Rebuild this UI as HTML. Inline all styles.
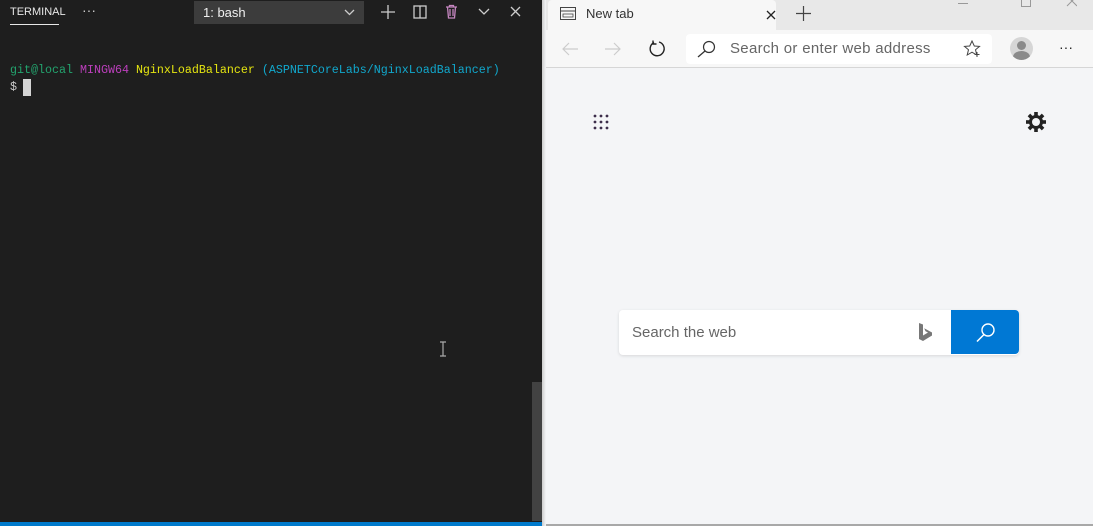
<!DOCTYPE html>
<html><head><style>
*{margin:0;padding:0;box-sizing:border-box}
body{width:1093px;height:526px;overflow:hidden;position:relative;background:#f4f5f7;font-family:"Segoe UI","Liberation Sans",sans-serif}
.term{position:absolute;left:0;top:0;width:542px;height:526px;background:#1e1e1e;color:#ccc}
.abs{position:absolute}
.mono{font-family:"Liberation Mono","DejaVu Sans Mono",monospace;font-size:11.67px;white-space:pre}
</style></head><body>
<div class="term">
 <div class="abs" style="left:10px;top:6px;font-size:11px;color:#e7e7e7">TERMINAL</div>
 <div class="abs" style="left:10px;top:24px;width:49px;height:1px;background:#e7e7e7"></div>
 <div class="abs" style="left:82px;top:2px;font-size:14px;color:#ccc">···</div>
 <div class="abs" style="left:194px;top:1px;width:170px;height:23px;background:#3c3c3c;color:#f0f0f0;font-size:13px;padding:4px 9px">1: bash
  <svg class="abs" style="left:150px;top:8px" width="11" height="7"><path d="M1 1l4.5 4.5L10 1" stroke="#ccc" fill="none" stroke-width="1.3"/></svg></div>
 <svg class="abs" style="left:381px;top:5px" width="14" height="14"><path d="M7 0v14M0 7h14" stroke="#ccc" stroke-width="1.3"/></svg>
 <svg class="abs" style="left:413px;top:5px" width="14" height="14"><rect x="1" y="1" width="12" height="12" fill="none" stroke="#ccc" stroke-width="1.3"/><path d="M7 1v12" stroke="#ccc" stroke-width="1.3"/></svg>
 <svg class="abs" style="left:445px;top:4px" width="13" height="15"><path d="M1 3h11M4.5 3V1.5h4V3M2.5 3l1 11h6l1-11M5 5v7M8 5v7" stroke="#c586c0" fill="none" stroke-width="1.3"/></svg>
 <svg class="abs" style="left:478px;top:8px" width="12" height="8"><path d="M1 1l5 5 5-5" stroke="#ccc" fill="none" stroke-width="1.3"/></svg>
 <svg class="abs" style="left:510px;top:6px" width="11" height="11"><path d="M1 1l9 9M10 1l-9 9" stroke="#ccc" stroke-width="1.3"/></svg>
 <div class="abs mono" style="left:10px;top:63px"><span style="color:#23a36e">git@local</span> <span style="color:#bc3fbc">MINGW64</span> <span style="color:#e5e510">NginxLoadBalancer</span> <span style="color:#11a8cd">(ASPNETCoreLabs/NginxLoadBalancer)</span></div>
 <div class="abs mono" style="left:10px;top:80px;color:#ccc">$</div>
 <div class="abs" style="left:23px;top:79px;width:8px;height:17px;background:#d4d4d4"></div>
 <svg class="abs" style="left:439px;top:341px" width="8" height="16"><path d="M1 1h6M4 1v14M1 15h6" stroke="#aaa" stroke-width="1.2" fill="none"/></svg>
 <div class="abs" style="left:532px;top:382px;width:10px;height:139px;background:#424242"></div>
 <div class="abs" style="left:0;top:522px;width:542px;height:4px;background:#007acc"></div>
</div>
<div class="abs" style="left:542px;top:0;width:4px;height:526px;background:linear-gradient(90deg,#ccc,#f4f5f7)"></div>
<div class="abs" style="left:546px;top:0;width:547px;height:30px;background:#e8e8e8"></div>
<div class="abs" style="left:548px;top:0;width:228px;height:30px;background:#f7f7f7;border-radius:4px 4px 0 0"></div>
<svg class="abs" style="left:560px;top:7px" width="16" height="13"><rect x="0.5" y="0.5" width="15" height="12" fill="none" stroke="#444"/><path d="M0.5 4h15" stroke="#444"/><rect x="3" y="7" width="10" height="3" fill="none" stroke="#444" stroke-width=".8"/></svg>
<div class="abs" style="left:586px;top:6px;font-size:13px;color:#333">New tab</div>
<svg class="abs" style="left:766px;top:10px" width="10" height="10"><path d="M1 1l8 8M9 1l-8 8" stroke="#222" stroke-width="1.3"/></svg>
<svg class="abs" style="left:796px;top:6px" width="15" height="15"><path d="M7.5 0v15M0 7.5h15" stroke="#444" stroke-width="1.2"/></svg>
<div class="abs" style="left:958px;top:3px;width:10px;height:1px;background:#999"></div>
<div class="abs" style="left:1021px;top:-2px;width:10px;height:9px;border:1px solid #999"></div>
<svg class="abs" style="left:1066px;top:0" width="11" height="7"><path d="M1 -4l10 10M11 -4l-10 10" stroke="#999" stroke-width="1"/></svg>
<div class="abs" style="left:546px;top:30px;width:547px;height:38px;background:#f7f7f7;border-bottom:1px solid #d6d6d6"></div>
<svg class="abs" style="left:561px;top:41px" width="18" height="16"><path d="M17 8H2M8 2L2 8l6 6" stroke="#ccc" fill="none" stroke-width="1.2"/></svg>
<svg class="abs" style="left:604px;top:41px" width="18" height="16"><path d="M1 8h15M10 2l6 6-6 6" stroke="#ccc" fill="none" stroke-width="1.2"/></svg>
<svg class="abs" style="left:648px;top:40px" width="18" height="18"><path d="M6 2.5A7 7 0 1 0 11 2" stroke="#222" fill="none" stroke-width="1.4"/><path d="M5 0.5v3.5h3.5" stroke="#222" fill="none" stroke-width="1.4"/></svg>
<div class="abs" style="left:686px;top:34px;width:306px;height:30px;background:#fff;border-radius:4px"></div>
<svg class="abs" style="left:697px;top:40px" width="20" height="18"><circle cx="12" cy="7" r="5.5" stroke="#333" fill="none" stroke-width="1.2"/><path d="M8 11l-7 6" stroke="#333" stroke-width="1.3"/></svg>
<div class="abs" style="left:730px;top:40px;font-size:15px;color:#666;letter-spacing:.3px">Search or enter web address</div>
<svg class="abs" style="left:963px;top:40px" width="18" height="18"><path d="M9 1l2.3 5 5.2.4-4 3.4 1.3 5.2L9 12.2 4.2 15l1.3-5.2-4-3.4 5.2-.4z" stroke="#444" fill="none" stroke-width="1"/><path d="M14 12v5M11.5 14.5h5" stroke="#444"/></svg>
<div class="abs" style="left:1010px;top:37px;width:23px;height:23px;border-radius:50%;background:#d6d6d6;overflow:hidden"><div class="abs" style="left:7px;top:4px;width:9px;height:9px;border-radius:50%;background:#8a8a8a"></div><div class="abs" style="left:3px;top:14px;width:17px;height:12px;border-radius:50% 50% 0 0;background:#8a8a8a"></div></div>
<div class="abs" style="left:1059px;top:39px;font-size:14px;color:#222">···</div>
<svg class="abs" style="left:593px;top:114px" width="16" height="16"><g fill="#3c2d4a"><circle cx="2" cy="2" r="1.4"/><circle cx="8" cy="2" r="1.4"/><circle cx="14" cy="2" r="1.4"/><circle cx="2" cy="8" r="1.4"/><circle cx="8" cy="8" r="1.4"/><circle cx="14" cy="8" r="1.4"/><circle cx="2" cy="14" r="1.4"/><circle cx="8" cy="14" r="1.4"/><circle cx="14" cy="14" r="1.4"/></g></svg>
<svg class="abs" style="left:1025px;top:111px" width="22" height="22" viewBox="0 0 22 22"><g fill="#222"><circle cx="11" cy="11" r="7"/><rect x="9.2" y="1" width="3.6" height="20"/><rect x="9.2" y="1" width="3.6" height="20" transform="rotate(45 11 11)"/><rect x="9.2" y="1" width="3.6" height="20" transform="rotate(90 11 11)"/><rect x="9.2" y="1" width="3.6" height="20" transform="rotate(135 11 11)"/></g><circle cx="11" cy="11" r="4" fill="#f4f5f7"/></svg>
<div class="abs" style="left:619px;top:310px;width:400px;height:45px;background:#fff;border-radius:4px;box-shadow:0 1px 3px rgba(0,0,0,.12)"></div>
<div class="abs" style="left:632px;top:324px;font-family:'Liberation Sans',sans-serif;font-size:15px;color:#666">Search the web</div>
<svg class="abs" style="left:918px;top:322px" width="16" height="21"><path d="M1 1l4 1.5v11l5-3-2.5-1.2-1.3-3L14 10.5v3L5 19 1 17z" fill="#777"/></svg>
<div class="abs" style="left:951px;top:310px;width:68px;height:44px;background:#0078d4;border-radius:0 4px 4px 0"></div>
<svg class="abs" style="left:975px;top:322px" width="22" height="21"><circle cx="13" cy="8" r="6" stroke="#fff" fill="none" stroke-width="1.4"/><path d="M9 12.5l-7 7" stroke="#fff" stroke-width="1.5"/></svg>
<div class="abs" style="left:546px;top:524px;width:547px;height:2px;background:#a8a8a8"></div>
</body></html>
